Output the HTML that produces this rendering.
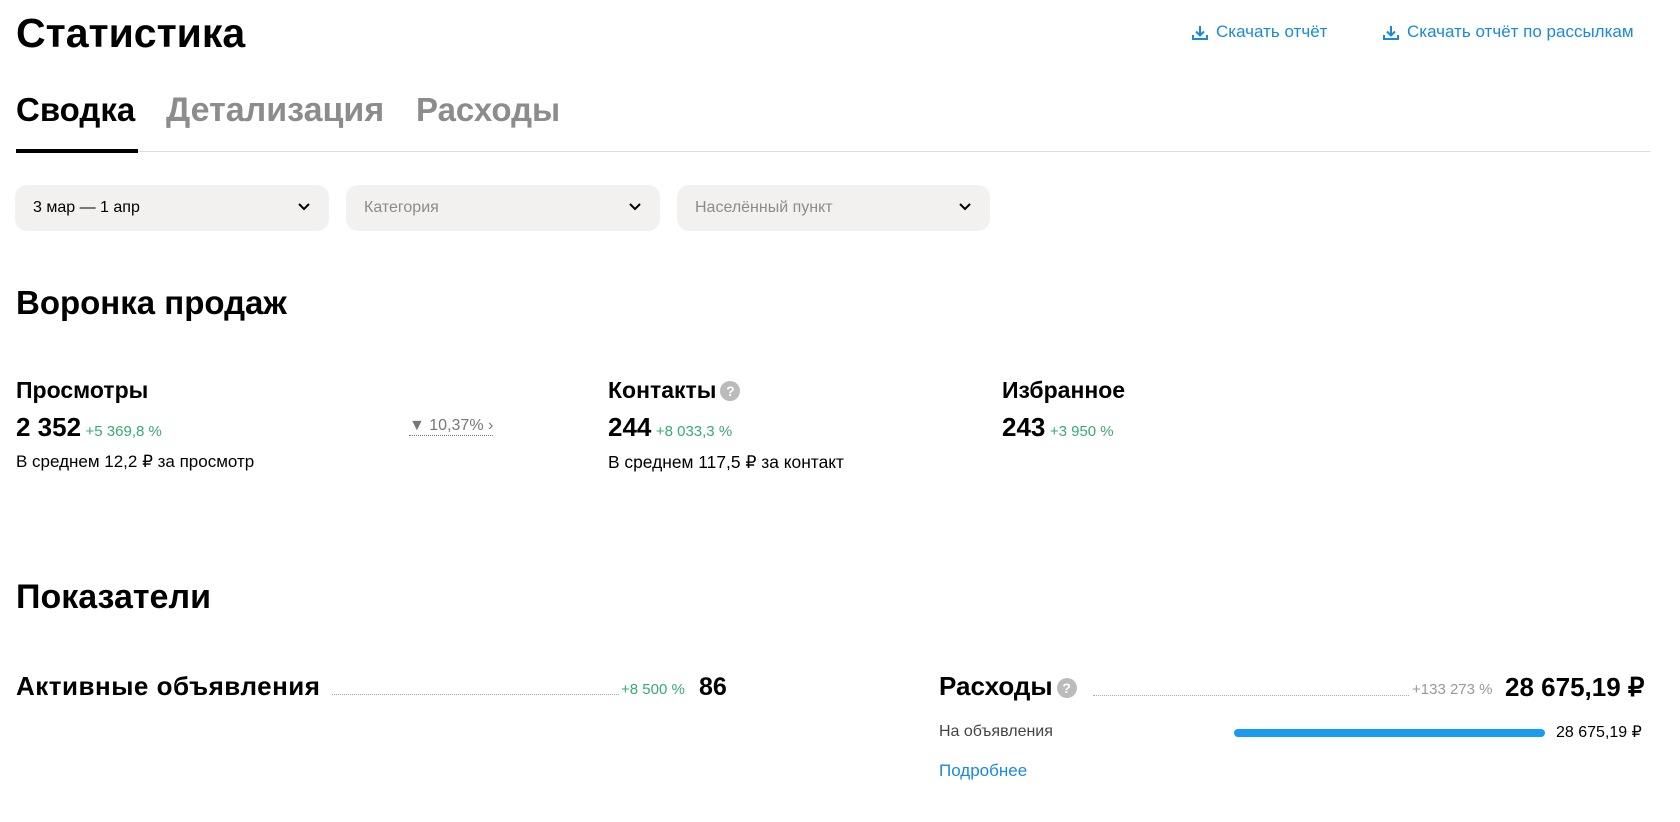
<!DOCTYPE html>
<html><head><meta charset="utf-8"><style>
*{margin:0;padding:0;box-sizing:border-box}
body{width:1680px;height:822px;background:#fff;font-family:"Liberation Sans",sans-serif;color:#000;position:relative;overflow:hidden}
.a{position:absolute;white-space:nowrap}
.b{font-weight:bold}
.link{color:#1a8ad8;font-size:17px}
.dd{position:absolute;top:185px;height:46px;background:#f2f1f0;border-radius:12px;font-size:16px;line-height:46px;padding-left:18px}
.dd svg{position:absolute;right:18px;top:17px}
.g{color:#3aa876;font-size:15px}
.dot{position:absolute;border-bottom:1px dotted #aaa;height:1px}
.q{display:inline-block;width:20px;height:20px;border-radius:50%;background:#bbb;color:#fff;font-size:14px;line-height:20px;text-align:center;vertical-align:2px;margin-left:4px}
</style></head><body>
<div class="a b" style="left:16px;top:10px;font-size:41px">Статистика</div>
<svg class="a" style="left:1191px;top:24px" width="18" height="18" viewBox="0 0 18 18"><path d="M9 2v9M5 7.5l4 4 4-4M2 11v4h14v-4" stroke="#1a8ad8" stroke-width="2" fill="none"/></svg>
<div class="a link" style="left:1216px;top:22px">Скачать отчёт</div>
<svg class="a" style="left:1382px;top:24px" width="18" height="18" viewBox="0 0 18 18"><path d="M9 2v9M5 7.5l4 4 4-4M2 11v4h14v-4" stroke="#1a8ad8" stroke-width="2" fill="none"/></svg>
<div class="a link" style="left:1407px;top:22px">Скачать отчёт по рассылкам</div>
<div class="a b" style="left:16px;top:91px;font-size:33px">Сводка</div>
<div class="a b" style="left:166px;top:91px;font-size:34px;color:#8c8c8c">Детализация</div>
<div class="a b" style="left:416px;top:91px;font-size:33px;color:#8c8c8c">Расходы</div>
<div class="a" style="left:16px;top:151px;width:1635px;height:1px;background:#ddd"></div>
<div class="a" style="left:16px;top:149px;width:122px;height:4px;background:#000"></div>
<div class="dd" style="left:15px;width:314px">3 мар — 1 апр<svg width="14" height="10" viewBox="0 0 14 10"><path d="M2 2l5 5 5-5" stroke="#000" stroke-width="2" fill="none"/></svg></div>
<div class="dd" style="left:346px;width:314px;color:#8c8c8c">Категория<svg width="14" height="10" viewBox="0 0 14 10"><path d="M2 2l5 5 5-5" stroke="#000" stroke-width="2" fill="none"/></svg></div>
<div class="dd" style="left:677px;width:313px;color:#8c8c8c">Населённый пункт<svg width="14" height="10" viewBox="0 0 14 10"><path d="M2 2l5 5 5-5" stroke="#000" stroke-width="2" fill="none"/></svg></div>
<div class="a b" style="left:16px;top:284px;font-size:33px">Воронка продаж</div>
<div class="a b" style="left:16px;top:377px;font-size:23px">Просмотры</div>
<div class="a" style="left:16px;top:412px"><span class="b" style="font-size:26px">2 352</span> <span class="g">+5 369,8 %</span></div>
<div class="a" style="left:16px;top:452px;font-size:17px">В среднем 12,2 ₽ за просмотр</div>
<div class="a" style="left:409px;top:417px;font-size:16px;color:#777;border-bottom:1px dotted #777">▼ 10,37% ›</div>
<div class="a b" style="left:608px;top:377px;font-size:23px">Контакты<span class="q">?</span></div>
<div class="a" style="left:608px;top:412px"><span class="b" style="font-size:26px">244</span> <span class="g">+8 033,3 %</span></div>
<div class="a" style="left:608px;top:452px;font-size:17.4px">В среднем 117,5 ₽ за контакт</div>
<div class="a b" style="left:1002px;top:377px;font-size:23px">Избранное</div>
<div class="a" style="left:1002px;top:412px"><span class="b" style="font-size:26px">243</span> <span class="g">+3 950 %</span></div>
<div class="a b" style="left:16px;top:578px;font-size:34px">Показатели</div>
<div class="a b" style="left:16px;top:671px;font-size:26px;letter-spacing:0.5px">Активные объявления</div>
<div class="dot" style="left:332px;top:694px;width:287px"></div>
<div class="a g" style="left:621px;top:681px">+8 500 %</div>
<div class="a b" style="left:699px;top:673px;font-size:25px">86</div>
<div class="a b" style="left:939px;top:671px;font-size:26px">Расходы<span class="q">?</span></div>
<div class="dot" style="left:1093px;top:695px;width:316px"></div>
<div class="a" style="left:1412px;top:681px;font-size:15px;color:#999">+133 273 %</div>
<div class="a b" style="left:1505px;top:672px;font-size:26px">28 675,19 ₽</div>
<div class="a" style="left:939px;top:723px;font-size:16px;color:#444">На объявления</div>
<div class="a" style="left:1234px;top:729px;width:311px;height:8px;border-radius:4px;background:#1a9bf0"></div>
<div class="a" style="left:1556px;top:722px;font-size:16px">28 675,19 ₽</div>
<div class="a" style="left:939px;top:761px;font-size:17px;color:#1a8ad8">Подробнее</div>
</body></html>
